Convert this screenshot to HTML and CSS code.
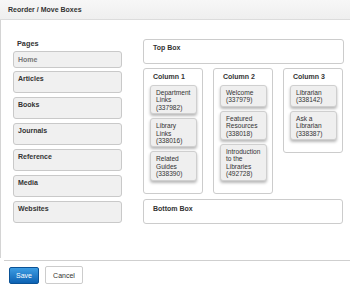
FILE: index.html
```html
<!DOCTYPE html>
<html>
<head>
<meta charset="utf-8">
<link rel="stylesheet" href="styles.css">
</head>
<body>
<div class="modal">
  <div class="header">Reorder / Move Boxes</div>
  <div class="content">
    <div class="pages">
      <div class="pages-title">Pages</div>
      <div class="page page-home">Home</div>
      <div class="page">Articles</div>
      <div class="page">Books</div>
      <div class="page">Journals</div>
      <div class="page">Reference</div>
      <div class="page">Media</div>
      <div class="page">Websites</div>
    </div>
    <div class="layout">
      <div class="box">Top Box</div>
      <div class="columns">
        <div class="column">
          <div class="col-title">Column 1</div>
          <div class="card">Department<br>Links<br>(337982)</div>
          <div class="card">Library<br>Links<br>(338016)</div>
          <div class="card">Related<br>Guides<br>(338390)</div>
        </div>
        <div class="column">
          <div class="col-title">Column 2</div>
          <div class="card">Welcome<br>(337979)</div>
          <div class="card">Featured<br>Resources<br>(338018)</div>
          <div class="card">Introduction<br>to the<br>Libraries<br>(492728)</div>
        </div>
        <div class="column">
          <div class="col-title">Column 3</div>
          <div class="card">Librarian<br>(338142)</div>
          <div class="card">Ask a<br>Librarian<br>(338387)</div>
        </div>
      </div>
      <div class="box box-bottom">Bottom Box</div>
    </div>
  </div>
  <div class="footer">
    <button class="btn btn-save">Save</button>
    <button class="btn btn-cancel">Cancel</button>
  </div>
</div>
</body>
</html>
```
FILE: styles.css
```css
html, body {
  margin: 0;
  padding: 0;
  background: #fff;
}
body {
  font-family: "Liberation Sans", Arial, sans-serif;
  color: #333;
  width: 350px;
  height: 291px;
  overflow: hidden;
}
.header {
  height: 19px;
  line-height: 19px;
  padding-left: 8px;
  font-size: 7px;
  font-weight: bold;
  color: #333;
  background: linear-gradient(#f7f7f7, #efefef);
  border-bottom: 1px solid #dcdcdc;
}
.content {
  height: 238px;
  box-sizing: border-box;
  border-left: 1px solid #d4d4d4;
  padding: 19px 0 0 12px;
  display: flex;
  gap: 21px;
}
.pages {
  width: 109px;
}
.pages-title {
  font-size: 7.3px;
  font-weight: bold;
  line-height: 10px;
  padding-left: 4px;
  margin-bottom: 2px;
}
.page {
  box-sizing: border-box;
  height: 22px;
  margin-bottom: 4px;
  padding: 3px 4px 0 4px;
  line-height: 8px;
  font-size: 7px;
  font-weight: bold;
  color: #333;
  background: #f0f0f0;
  border: 1px solid #c9c9c9;
  border-radius: 3px;
}
.page-home {
  height: 17px;
  margin-bottom: 3px;
  padding-top: 4px;
  color: #777;
}
.layout {
  width: 201px;
}
.box {
  box-sizing: border-box;
  height: 25px;
  padding: 4px 9px 0;
  line-height: 8px;
  font-size: 7px;
  font-weight: bold;
  border: 1px solid #ccc;
  border-radius: 3px;
}
.box-bottom {
  width: 200px;
  margin-top: 5px;
  padding-top: 5px;
}
.columns {
  display: flex;
  align-items: flex-start;
  gap: 10px;
  margin-top: 4px;
}
.column {
  box-sizing: border-box;
  width: 60px;
  padding: 4px 5px 12px 6px;
  border: 1px solid #ccc;
  border-radius: 3px;
}
.col-title {
  font-size: 7px;
  font-weight: bold;
  line-height: 8px;
  padding-left: 3px;
  margin-bottom: 4px;
}
.card {
  padding: 3px 3px 2px 5px;
  margin-bottom: 4px;
  font-size: 6.6px;
  line-height: 7.4px;
  color: #333;
  background: #efefef;
  border: 1px solid #cfcfcf;
  border-radius: 3px;
  box-shadow: 0 2px 3px rgba(0, 0, 0, 0.28);
}
.card:last-child {
  margin-bottom: 0;
}
.footer {
  margin: 2px 0 0 4px;
  border-top: 1px solid #cfcfcf;
  padding: 5px 0 0 5px;
  display: flex;
  gap: 6px;
}
.btn {
  height: 18px;
  font-family: "Liberation Sans", Arial, sans-serif;
  font-size: 7px;
  border-radius: 2px;
  padding: 0;
  margin: 0;
}
.btn-save {
  width: 30px;
  color: #fff;
  background: linear-gradient(#3d9de3, #0d62b3);
  border: 1px solid #0a5296;
  margin-top: 1px;
  height: 17px;
}
.btn-cancel {
  width: 38px;
  color: #333;
  background: #fff;
  border: 1px solid #ccc;
}
```
